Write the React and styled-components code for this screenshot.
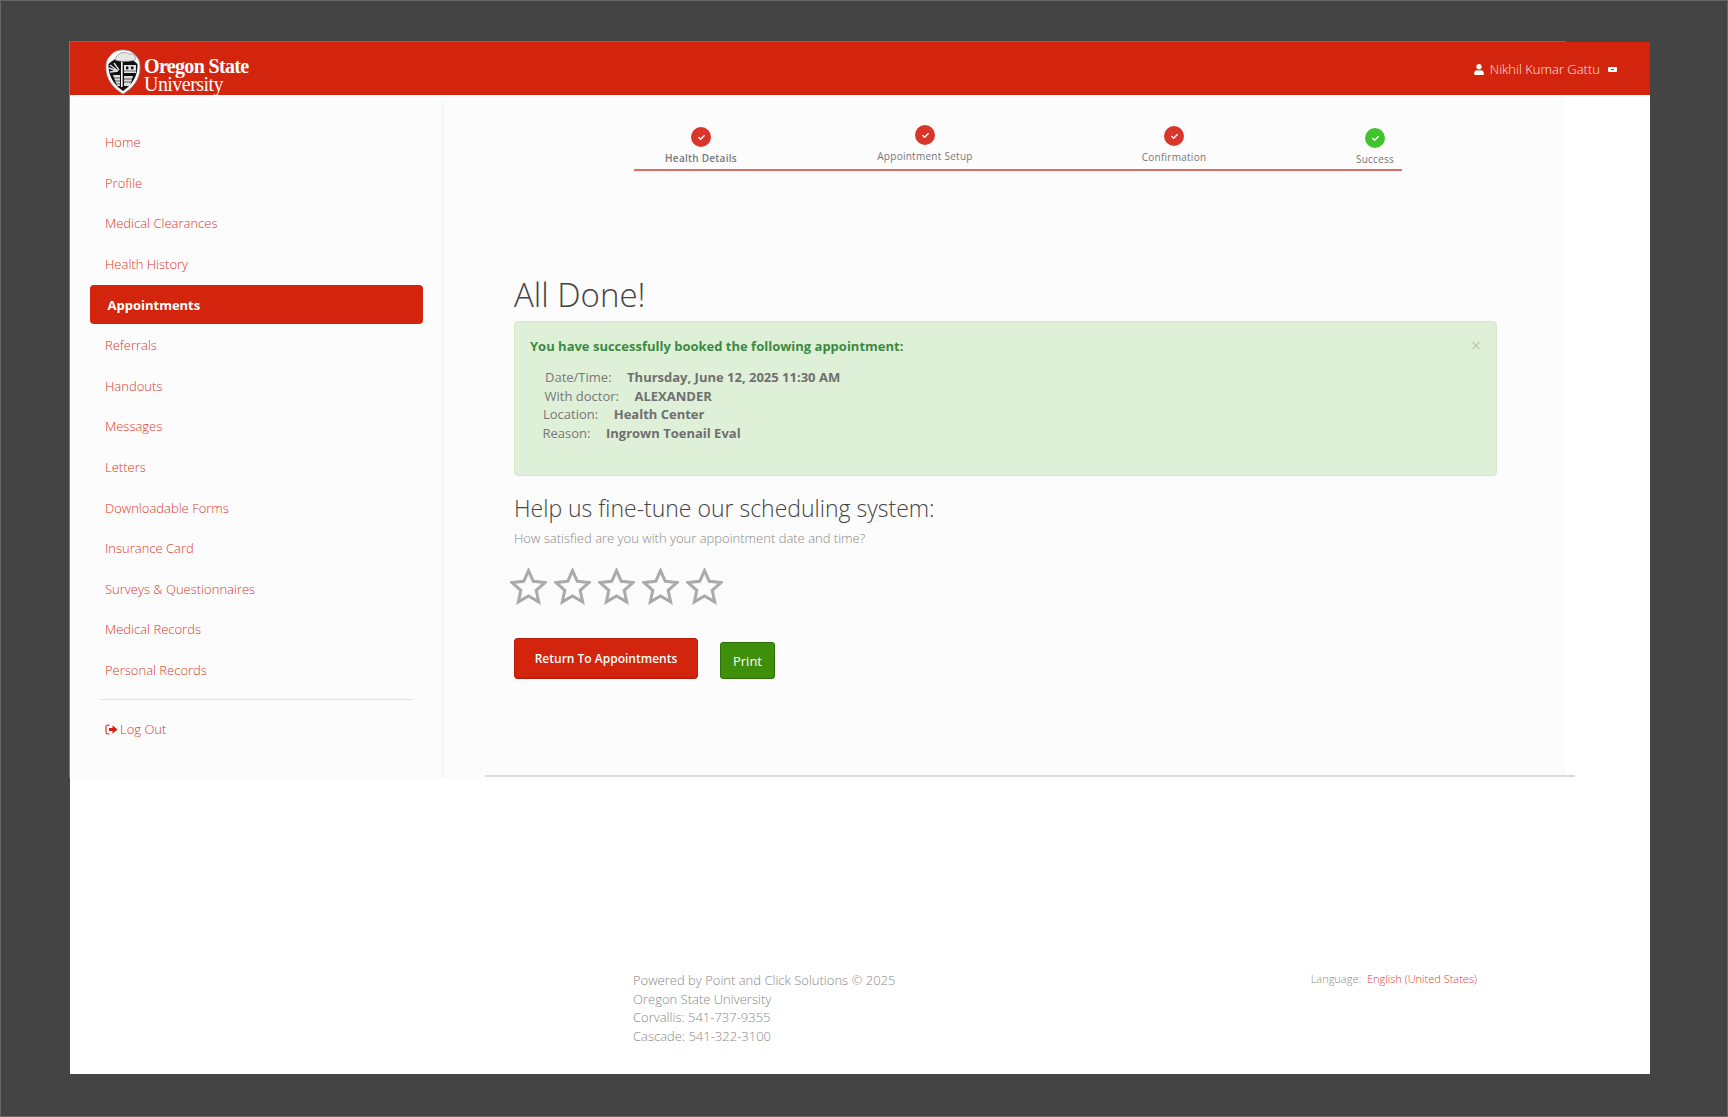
import React from "react";
import styled, { createGlobalStyle } from "styled-components";
import { FaUser, FaCheck } from "react-icons/fa";

const Global = createGlobalStyle`
  html, body { margin: 0; padding: 0; background: #444; }
  body { font-family: "Open Sans", "Liberation Sans", sans-serif; }
  * { box-sizing: border-box; }
`;

const Page = styled.div`
  width: 1728px; height: 1117px; background: #444; border: 1px solid #666;
  padding: 41px 77px 43px 69px; overflow: hidden;
`;
const Frame = styled.div`
  position: relative; width: 1580px; height: 1032px; background: #fff;
  display: flex; flex-direction: column;
  &::before { content: ""; position: absolute; left: -1px; top: -1px; width: 1497px; height: 1px; background: #6e6e6e; }
  &::after { content: ""; position: absolute; left: -1px; top: 0; width: 1px; height: 736px; background: #777; }
`;
const Header = styled.header`
  height: 53px; flex: none; background: #d3240e; display: flex; align-items: flex-start;
  justify-content: space-between; padding: 7px 33px 0 35px; color: #fff;
`;
const Brand = styled.div`display: flex; gap: 3px;`;
const BrandText = styled.div`
  font-family: "Liberation Serif", serif; color: #fff; font-size: 20px; line-height: 18px;
  padding-top: 8px; letter-spacing: -0.65px;
  b { display: block; font-weight: 700; }
  span { display: block; font-weight: 400; letter-spacing: -0.55px; }
`;
const UserBox = styled.div`
  display: flex; align-items: center; height: 39px; padding-top: 1px;
  font-size: 13px; font-weight: 300; color: #fbe4e0;
  svg { color: #fff; width: 10px; height: 11px; margin-right: 6px; }
`;
const UserCaret = styled.i`
  display: block; width: 9px; height: 5px; margin-left: 8px; background: #fff; border-radius: 1px; position: relative;
  &::after { content: ""; position: absolute; left: 3px; top: 2px; width: 3px; height: 1px; background: #d3240e; }
`;
const Body = styled.div`height: 683px; flex: none; display: flex;`;
const Sidebar = styled.nav`
  width: 374px; flex: none; background: #fcfcfc; padding: 27px 19px 0 19.5px; position: relative;
  &::after { content: ""; position: absolute; right: 0; top: 7px; bottom: 0; width: 2px; background: #f6f6f6; }
`;
const NavLink = styled.a`
  display: flex; align-items: center; height: 40.6px; padding-left: 15.5px; font-size: 13px;
  font-weight: 300; color: #dc3a2a;
`;
const ActiveLink = styled.a`
  display: flex; align-items: center; height: 38.5px; margin: 1px 0; width: 333px; padding: 0 0 0 18px;
  font-size: 13px; font-weight: 700; color: #fff; background: #d3240e; border-radius: 4px;
`;
const SideRule = styled.hr`
  border: 0; height: 1px; background: #e3e3e3; margin: 9px 0 0 10.5px; width: 313px;
`;
const LogOut = styled(NavLink)`
  margin-top: 8.5px; padding-left: 15.5px;
  svg { width: 13px; height: 11px; margin-right: 2px; }
`;
const Main = styled.main`
  width: 1122px; flex: none; background: #fcfcfc; display: flex; flex-direction: column;
  position: relative;
`;
const Stepper = styled.div`
  margin-left: 190px; width: 768px; height: 76px; flex: none; display: flex;
  border-bottom: 2px solid #df6d64;
`;
const Step = styled.div`
  width: ${p => p.$w}px; margin-left: ${p => p.$ml || 0}px; margin-top: ${p => p.$top}px;
  display: flex; flex-direction: column; align-items: center; white-space: nowrap;
`;
const StepDot = styled.div`
  width: 20px; height: 20px; border-radius: 50%; background: ${p => p.$green ? "#3fc42c" : "#d9352a"};
  display: flex; align-items: center; justify-content: center; color: #fff;
  svg { width: 7px; height: 7px; }
`;
const StepLabel = styled.div`
  margin-top: 3.5px; font-size: 10px; line-height: 14px; letter-spacing: 0.27px; color: #777;
  font-weight: ${p => p.$strong ? 600 : 400};
`;
const Content = styled.div`margin-left: 70px; width: 983px; display: flex; flex-direction: column; flex: 1;`;
const Title = styled.h1`
  margin: 104px 0 0; font-size: 33px; line-height: 40px; font-weight: 300; color: #444;
`;
const Alert = styled.div`
  position: relative; margin-top: 6px; height: 155px; background: #dff0d8; border: 1px solid #d6e9c6;
  border-radius: 4px; padding: 14px 15px;
`;
const Close = styled.span`
  position: absolute; right: 15px; top: 13px; font-size: 18px; line-height: 20px; color: #b9c9b4; font-weight: 400;
`;
const AlertTitle = styled.div`font-size: 13px; line-height: 20px; font-weight: 700; color: #3b8a41;`;
const Details = styled.div`margin-top: 12px;`;
const Detail = styled.div`
  display: flex; gap: 15.5px; margin-left: ${p => p.$ml}px; height: 18.6px; align-items: center;
  font-size: 13px; color: #777; font-weight: 400;
  b { font-weight: 700; color: #6f6f6f; }
`;
const Heading = styled.h2`
  margin: 17px 0 0; font-size: 23px; line-height: 30px; font-weight: 300; color: #444;
`;
const Question = styled.p`
  margin: 5px 0 0; font-size: 13px; line-height: 20px; font-weight: 300; color: #888;
`;
const Stars = styled.div`display: flex; gap: 7px; margin: 20px 0 0 -4px; height: 37px;`;
const Actions = styled.div`display: flex; gap: 22px; margin-top: 33px; align-items: flex-start;`;
const ReturnBtn = styled.button`
  width: 184px; height: 41px; padding: 0; background: #d3240e; border: 1px solid #b71e0b; border-bottom-width: 2px;
  border-radius: 4px; color: #fff; font: 600 12px "Open Sans", sans-serif;
`;
const PrintBtn = styled.button`
  width: 55px; height: 37px; margin-top: 4px; background: #3f8f0a; border: 1px solid #2f6f07;
  border-radius: 3px; color: #fff; font: 400 13px "Open Sans", sans-serif;
`;
const MainRule = styled.hr`
  position: absolute; left: 41px; bottom: 1.5px; width: 1090px; height: 1.5px; margin: 0; border: 0; background: #dcdcdc;
`;
const Footer = styled.footer`
  flex: 1; display: flex; justify-content: space-between; align-items: flex-start;
  padding: 193px 173px 0 563px;
`;
const FooterLines = styled.div`font-size: 13px; line-height: 18.6px; font-weight: 300; color: #888;`;
const Lang = styled.div`
  margin-top: -1px; font-size: 11px; line-height: 18px; font-weight: 300; color: #888;
  a { color: #e0402f; margin-left: 3px; font-weight: 300; }
`;

const Crest = () => (
  <svg width="36" height="46" viewBox="0 0 36 46" aria-hidden="true">
    <path d="M18 1 C24 1 28 3 31 7 C34 10 35 13 35 19 C35 30 28 39 18 45 C8 39 1 30 1 19 C1 13 2 10 5 7 C8 3 12 1 18 1Z" fill="#fff" stroke="#999" strokeWidth=".8" />
    <path d="M18 9 C12 9 7 11 3.5 15 C3 27 9 36 18 42 C27 36 33 27 32.5 15 C29 11 24 9 18 9Z" fill="#111" />
    <path d="M10 11 C12 3 20 2 24 5 C28 4 32 7 30 11 C23 13 16 13 10 11Z" fill="#e6e6e6" stroke="#777" strokeWidth=".6" />
    <path d="M5 16 L13 22 M5 23 L13 22 M9 14 L14 21 M4 19 L12 22" stroke="#ddd" strokeWidth="1.4" />
    <rect x="19" y="16" width="12" height="8" fill="#e2e2e2" />
    <rect x="21" y="17.5" width="2.4" height="2.8" fill="#111" /><rect x="26" y="17.5" width="2.4" height="2.8" fill="#111" />
    <path d="M19 22 H31" stroke="#555" strokeWidth=".8" />
    <rect x="16" y="13" width="1.6" height="25" fill="#fff" />
    <path d="M8 26 H15 V37 H12Z M19 27 H28 L25 37 H19Z" fill="#ddd" />
    <path d="M9 29 H15 M10 32 H15 M11 35 H15 M19 30 H27 M19 33 H26" stroke="#333" strokeWidth=".8" />
  </svg>
);

const SignOut = () => (
  <svg viewBox="0 0 13 11" aria-hidden="true">
    <path d="M4.5 1.2H2.6C1.6 1.2 1 1.8 1 2.8V8.2C1 9.2 1.6 9.8 2.6 9.8H4.5" fill="none" stroke="#e0493a" strokeWidth="1.3" />
    <path d="M4 4H7.5V1.3L12.6 5.5 7.5 9.7V7H4Z" fill="#dd1f10" />
  </svg>
);

const Star = () => (
  <svg width="37" height="37" viewBox="0 0 37 37" aria-hidden="true">
    <polygon points="18.5,2.6 23.3,13.3 35,14.5 26.2,22.4 28.7,33.9 18.5,28 8.3,33.9 10.8,22.4 2,14.5 13.7,13.3"
      fill="none" stroke="#aaa" strokeWidth="3" strokeLinejoin="miter" />
  </svg>
);

const links = ["Home", "Profile", "Medical Clearances", "Health History"];
const linksAfter = ["Referrals", "Handouts", "Messages", "Letters", "Downloadable Forms", "Insurance Card", "Surveys & Questionnaires", "Medical Records", "Personal Records"];
const steps = [
  { label: "Health Details", w: 134, top: 32, strong: true },
  { label: "Appointment Setup", w: 314, top: 30 },
  { label: "Confirmation", w: 184, top: 31 },
  { label: "Success", w: 54, ml: 82, top: 33, green: true },
];
const details = [
  { k: "Date/Time:", v: "Thursday, June 12, 2025 11:30 AM", ml: 15 },
  { k: "With doctor:", v: "ALEXANDER", ml: 14.5 },
  { k: "Location:", v: "Health Center", ml: 13 },
  { k: "Reason:", v: "Ingrown Toenail Eval", ml: 12.5 },
];

export default function App() {
  return (
    <>
      <Global />
      <Page>
        <Frame>
          <Header>
            <Brand>
              <Crest />
              <BrandText><b>Oregon State</b><span>University</span></BrandText>
            </Brand>
            <UserBox><FaUser />Nikhil Kumar Gattu<UserCaret /></UserBox>
          </Header>
          <Body>
            <Sidebar>
              {links.map(l => <NavLink key={l}>{l}</NavLink>)}
              <ActiveLink>Appointments</ActiveLink>
              {linksAfter.map(l => <NavLink key={l}>{l}</NavLink>)}
              <SideRule />
              <LogOut><SignOut />Log Out</LogOut>
            </Sidebar>
            <Main>
              <Stepper>
                {steps.map(s => (
                  <Step key={s.label} $w={s.w} $ml={s.ml} $top={s.top}>
                    <StepDot $green={s.green}><FaCheck /></StepDot>
                    <StepLabel $strong={s.strong}>{s.label}</StepLabel>
                  </Step>
                ))}
              </Stepper>
              <Content>
                <Title>All Done!</Title>
                <Alert>
                  <Close>×</Close>
                  <AlertTitle>You have successfully booked the following appointment:</AlertTitle>
                  <Details>
                    {details.map(d => (
                      <Detail key={d.k} $ml={d.ml}><span>{d.k}</span><b>{d.v}</b></Detail>
                    ))}
                  </Details>
                </Alert>
                <Heading>Help us fine-tune our scheduling system:</Heading>
                <Question>How satisfied are you with your appointment date and time?</Question>
                <Stars>{[0, 1, 2, 3, 4].map(i => <Star key={i} />)}</Stars>
                <Actions>
                  <ReturnBtn>Return To Appointments</ReturnBtn>
                  <PrintBtn>Print</PrintBtn>
                </Actions>
              </Content>
              <MainRule />
            </Main>
          </Body>
          <Footer>
            <FooterLines>
              <div>Powered by Point and Click Solutions © 2025</div>
              <div>Oregon State University</div>
              <div>Corvallis: 541-737-9355</div>
              <div>Cascade: 541-322-3100</div>
            </FooterLines>
            <Lang>Language: <a>English (United States)</a></Lang>
          </Footer>
        </Frame>
      </Page>
    </>
  );
}
